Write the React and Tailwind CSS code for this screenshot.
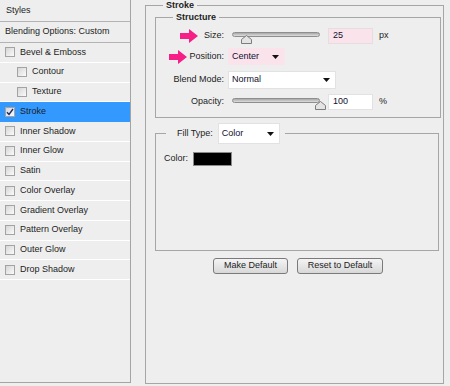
import React from "react";

const FONT = "font-[family-name:'Liberation_Sans',Arial,sans-serif]";

function Check({ checked }) {
  return (
    <span className="w-[10px] h-[10px] shrink-0 border border-[#a3a3a3] bg-linear-to-br from-[#d6d6d6] to-[#fbfbfb] flex items-center justify-center">
      {checked && (
        <svg width="8" height="8" viewBox="0 0 8 8">
          <path d="M1 4.2 L3 6.5 L7 1" fill="none" stroke="#1b2a66" strokeWidth="1.4" />
        </svg>
      )}
    </span>
  );
}

const rows = [
  { label: "Bevel & Emboss" },
  { label: "Contour", indent: true },
  { label: "Texture", indent: true },
  { label: "Stroke", checked: true, selected: true },
  { label: "Inner Shadow" },
  { label: "Inner Glow" },
  { label: "Satin" },
  { label: "Color Overlay" },
  { label: "Gradient Overlay" },
  { label: "Pattern Overlay" },
  { label: "Outer Glow" },
  { label: "Drop Shadow" },
];

function Arrow() {
  return (
    <svg width="18" height="14" viewBox="0 0 18 14" className="shrink-0">
      <polygon points="0,4 9,4 9,0 18,7 9,14 9,10 0,10" fill="#f51f86" />
    </svg>
  );
}

function DownTri() {
  return (
    <svg width="7" height="4" viewBox="0 0 7 4" className="shrink-0">
      <polygon points="0,0 7,0 3.5,4" fill="#111" />
    </svg>
  );
}

function Slider({ pos }) {
  return (
    <div className="relative w-[88px] h-[16px] shrink-0">
      <div className="absolute left-0 right-0 top-[4px] h-[5px] rounded-full border border-[#8e8e8e] bg-linear-to-b from-[#a8a8a8] to-[#dedede]" />
      <svg
        width="11"
        height="9"
        viewBox="0 0 11 9"
        className="absolute top-[7px]"
        style={{ left: pos }}
      >
        <path d="M0.5 8.5 L0.5 4.5 L5.5 0.5 L10.5 4.5 L10.5 8.5 Z" fill="#e4e4e4" stroke="#7d7d7d" strokeWidth="1" />
      </svg>
    </div>
  );
}

function Select({ value, w, h, pink }) {
  return (
    <div
      className={
        "flex items-center justify-between pl-[3px] pr-[5px] shrink-0 border " +
        (pink ? "bg-[#fbe3ec] border-[#fbe3ec]" : "bg-white border-[#e2e2e2]")
      }
      style={{ width: w, height: h }}
    >
      <span className="text-[9px] text-[#101030]">{value}</span>
      <DownTri />
    </div>
  );
}

export default function App() {
  return (
    <div className={"w-[450px] h-[386px] bg-[#eeeeee] flex text-[#1d1d1d] " + FONT}>
      {/* Left panel */}
      <div className="w-[131px] h-[383px] border-r border-b border-[#a4a4a4] flex flex-col text-[9px]">
        <div className="h-[22px] flex items-center pl-[6px] border-b border-[#b3b3b3]">Styles</div>
        <div className="h-[21px] flex items-center pl-[5px] border-b border-[#b3b3b3]">Blending Options: Custom</div>
        {rows.map((r) => (
          <div
            key={r.label}
            className={
              "h-[19.75px] shrink-0 flex items-center gap-[5px] border-b " +
              (r.indent ? "pl-[17px] " : "pl-[5px] ") +
              (r.selected ? "bg-[#3399ff] border-[#3399ff]" : "border-white")
            }
          >
            <Check checked={r.checked} />
            <span>{r.label}</span>
          </div>
        ))}
      </div>

      {/* Right panel */}
      <fieldset className="ml-[14px] w-[299px] h-[384px] border border-[#a6a6a6] text-[9px]">
        <legend className="ml-[17px] px-[3px] font-bold leading-[10px]">Stroke</legend>

        <fieldset className="ml-[9px] mt-[2px] w-[286px] h-[106px] border border-[#a6a6a6]">
          <legend className="ml-[17px] px-[3px] font-bold leading-[11px]">Structure</legend>

          <div className="mt-[5px] h-[16px] flex items-center">
            <div className="w-[68px] flex justify-end items-center gap-[6px]">
              <Arrow />
              <span>Size:</span>
            </div>
            <div className="ml-[8px]"><Slider pos={9} /></div>
            <div className="ml-[8px] w-[45px] h-[16px] bg-[#fbe3ec] border border-[#e6dde0] flex items-center pl-[4px] text-[#101030]">25</div>
            <span className="ml-[6px]">px</span>
          </div>

          <div className="mt-[4px] h-[17px] flex items-center">
            <div className="w-[68px] flex justify-end items-center gap-[2px]">
              <Arrow />
              <span>Position:</span>
            </div>
            <div className="ml-[4px]"><Select value="Center" w={57} h={17} pink /></div>
          </div>

          <div className="mt-[6px] h-[18px] flex items-center">
            <div className="w-[68px] text-right">Blend Mode:</div>
            <div className="ml-[4px]"><Select value="Normal" w={108} h={18} /></div>
          </div>

          <div className="mt-[5px] h-[16px] flex items-center">
            <div className="w-[68px] text-right">Opacity:</div>
            <div className="ml-[8px]"><Slider pos={83} /></div>
            <div className="ml-[8px] w-[45px] h-[16px] bg-white border border-[#e2e2e2] flex items-center pl-[4px] text-[#101030]">100</div>
            <span className="ml-[6px]">%</span>
          </div>
        </fieldset>

        <fieldset className="ml-[9px] mt-[5px] w-[284px] h-[128px] border border-[#a6a6a6]">
          <legend className="ml-[10px] pl-[11px] pr-[5px]">
            <div className="inline-flex items-center">
              <span>Fill Type:</span>
              <div className="ml-[5px]"><Select value="Color" w={62} h={21} /></div>
            </div>
          </legend>
          <div className="mt-[8px] pl-[8px] flex items-center">
            <span>Color:</span>
            <div className="ml-[5px] w-[39px] h-[14px] bg-black border border-[#8a8a8a]" />
          </div>
        </fieldset>

        <div className="mt-[7px] ml-[67px] flex items-center">
          <button className="w-[75px] h-[16px] rounded-[3px] border border-[#7a7a7a] bg-linear-to-b from-[#f4f4f4] to-[#d8d8d8] text-[9px] text-[#1d1d1d] flex items-center justify-center">
            Make Default
          </button>
          <button className="ml-[9px] w-[86px] h-[16px] rounded-[3px] border border-[#7a7a7a] bg-linear-to-b from-[#f4f4f4] to-[#d8d8d8] text-[9px] text-[#1d1d1d] flex items-center justify-center">
            Reset to Default
          </button>
        </div>
      </fieldset>
    </div>
  );
}
